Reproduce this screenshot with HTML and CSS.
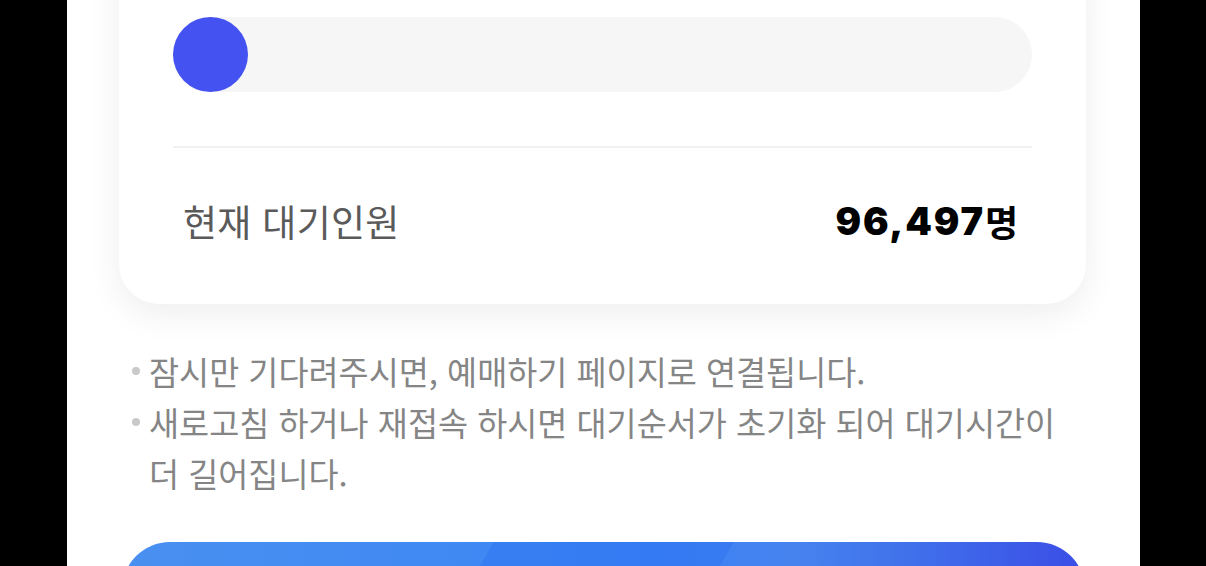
FILE: index.html
```html
<!DOCTYPE html>
<html lang="ko">
<head>
<meta charset="utf-8">
<title>대기열 안내</title>
<link rel="stylesheet" href="styles.css">
</head>
<body>
<main class="page">
  <section class="queue-card">
    <div class="progress">
      <div class="progress-knob"></div>
    </div>
    <hr class="divider">
    <div class="count-row">
      <span class="count-label">현재 대기인원</span>
      <span class="count-value"><span class="num">96,497</span><span class="unit">명</span></span>
    </div>
  </section>

  <ul class="notes">
    <li>잠시만 기다려주시면, 예매하기 페이지로 연결됩니다.</li>
    <li>새로고침 하거나 재접속 하시면 대기순서가 초기화 되어 대기시간이 더 길어집니다.</li>
  </ul>

  <button class="cta" type="button"><span class="cta-shine"></span></button>
</main>
</body>
</html>
```
FILE: styles.css
```css
* { box-sizing: border-box; }

html, body {
  margin: 0;
  padding: 0;
  background: #000;
  height: 566px;
  overflow: hidden;
}

body {
  font-family: "Noto Sans CJK KR", "Noto Sans", sans-serif;
}

.page {
  width: 1073px;
  margin: -60px 0 0 67px;
  background: #fff;
  min-height: 700px;
  padding: 0 54px 0 52px;
}

.queue-card {
  background: #fff;
  border-radius: 40px;
  box-shadow: 0 10px 34px rgba(0, 0, 0, 0.07);
  padding: 77px 54px 0;
}

.progress {
  height: 75px;
  border-radius: 38px;
  background: #f6f6f6;
  display: flex;
  align-items: center;
}

.progress-knob {
  width: 75px;
  height: 75px;
  border-radius: 50%;
  background: #4352f0;
}

.divider {
  border: 0;
  height: 2px;
  background: #f1f1f1;
  margin: 54px 0 0;
}

.count-row {
  display: flex;
  justify-content: space-between;
  align-items: center;
  padding: 53px 14px 63px 10px;
  height: 156px;
}

.count-label {
  font-size: 37px;
  font-weight: 400;
  color: #5a5a5a;
  line-height: 40px;
  letter-spacing: 0.3px;
}

.count-value {
  display: flex;
  align-items: center;
  line-height: 40px;
  color: #000;
}

.count-value .num {
  font-family: "Inter", "Liberation Sans", sans-serif;
  font-weight: 900;
  font-size: 38px;
  letter-spacing: 1.8px;
}

.count-value .unit {
  font-size: 36px;
  font-weight: 700;
}

.notes {
  list-style: none;
  margin: 41px 0 0;
  padding: 0 20px 0 30px;
  color: #858585;
  font-size: 32.7px;
  font-weight: 400;
  line-height: 51px;
}

.notes li {
  position: relative;
}

.notes li::before {
  content: "";
  position: absolute;
  left: -17px;
  top: 22px;
  width: 8px;
  height: 8px;
  border-radius: 50%;
  background: #c9c9c9;
}

.cta {
  display: block;
  position: relative;
  overflow: hidden;
  width: 963px;
  height: 110px;
  margin: 44px 0 0 3px;
  border: 0;
  border-radius: 48px;
  background: linear-gradient(90deg, #4a90f1 0%, #3f88f3 40%, #3b82f4 55%, #4683ef 70%, #3f6bea 85%, #3a4de6 100%);
}

.cta-shine {
  position: absolute;
  top: 0;
  left: 340px;
  width: 240px;
  height: 100%;
  background: rgba(40, 110, 240, 0.35);
  transform: skewX(-30deg);
}
```
